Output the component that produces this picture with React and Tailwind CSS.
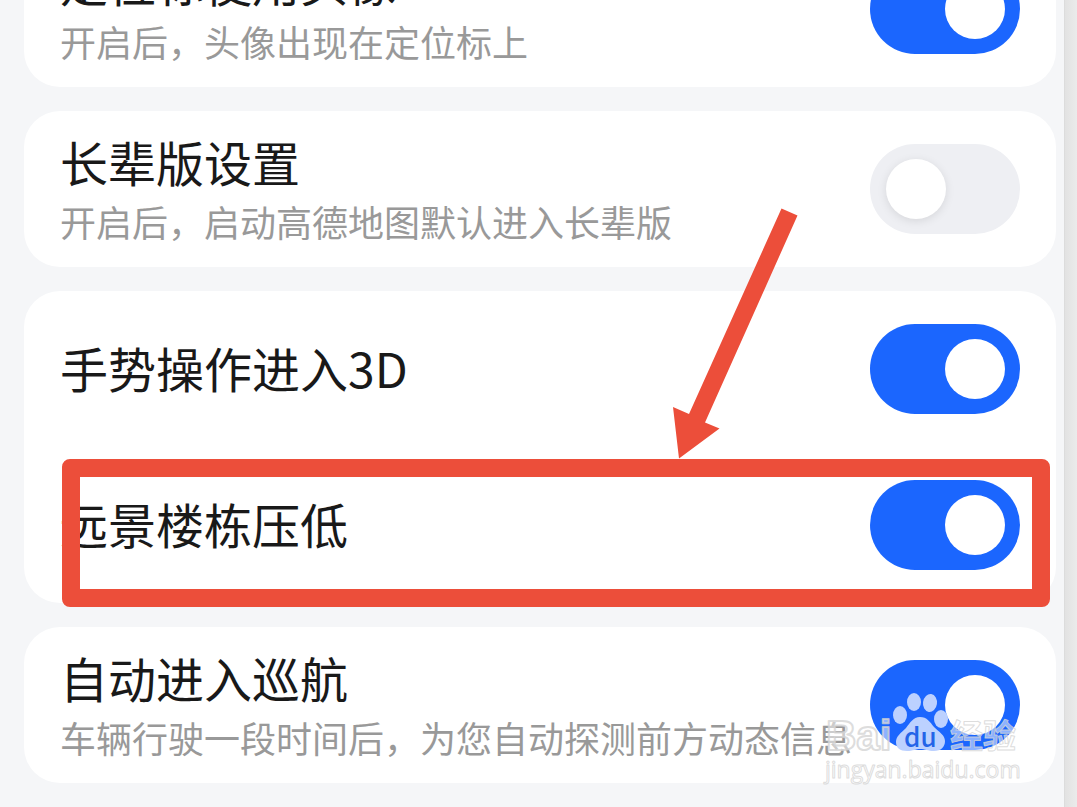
import React from "react";

const Toggle = ({ id, defaultChecked }) => (
  <input
    id={id}
    type="checkbox"
    role="switch"
    defaultChecked={defaultChecked}
    className="relative h-[90px] w-[150px] shrink-0 cursor-pointer appearance-none rounded-full bg-[#eeeff3] before:absolute before:left-4 before:top-[15px] before:size-[60px] before:rounded-full before:bg-white before:shadow-[0_2px_10px_rgba(0,0,0,0.1)] checked:bg-[#1b66fe] checked:before:left-[75px] checked:before:shadow-none"
  />
);

const SettingRow = ({ id, title, description, on, children }) => (
  <div className="relative flex h-[156px] items-center justify-between px-9">
    <div className="whitespace-nowrap">
      <label htmlFor={id} className="block pb-1 text-5xl leading-[60px] text-[#191919]">
        {title}
      </label>
      {description && <p className="text-4xl leading-[52px] text-[#999999]">{description}</p>}
    </div>
    <Toggle id={id} defaultChecked={on} />
    {children}
  </div>
);

const Card = ({ children }) => <section className="rounded-[36px] bg-white">{children}</section>;

const Highlight = () => (
  <>
    <div className="pointer-events-none absolute -bottom-1 left-[38px] right-[6px] top-3">
      <div className="h-full rounded-lg border-[18px] border-[#ec4e3a]" />
    </div>
    <svg
      className="pointer-events-none absolute -top-[240px] right-[258px]"
      width="126"
      height="252"
      viewBox="0 0 126 252"
      aria-hidden="true"
    >
      <path d="M109.500 1.500L125.500 8.500L33 215.500L47.500 221.500L7 251.500L1 200L17 207Z" fill="#ec4e3a" />
    </svg>
  </>
);

const Watermark = () => (
  <svg
    className="pointer-events-none absolute -bottom-1 right-[34px]"
    width="202"
    height="100"
    viewBox="0 0 202 100"
    aria-hidden="true"
  >
    <g fill="#ffffff" fillOpacity="0.5" stroke="#d4d4d4" strokeOpacity="0.8" strokeLinejoin="round">
      <text x="6" y="63" fontSize="42" fontWeight="700" strokeWidth="2" fontFamily="Liberation Sans, sans-serif">
        Bai
      </text>
      <text x="130" y="61" fontSize="33" fontWeight="700" strokeWidth="1" fontFamily="Noto Sans CJK SC, sans-serif">
        经验
      </text>
      <text x="5" y="91" fontSize="23" strokeWidth="1" fontFamily="Open Sans, sans-serif">
        jingyan.baidu.com
      </text>
    </g>
    <g fill="#bcd1ff">
      <ellipse cx="80" cy="28" rx="7" ry="9" />
      <ellipse cx="94" cy="15" rx="7" ry="9" />
      <ellipse cx="110" cy="16" rx="7" ry="9" transform="rotate(8 110 16)" />
      <ellipse cx="121" cy="32" rx="7" ry="9" />
      <path d="M100 30C93 30 90 36 86 41C81 46 76 49 76 55C76 61 80 64 87 64C93 64 96 62 100 62C105 62 108 64 114 64C121 64 125 60 125 54C125 48 119 45 114 40C110 35 107 30 100 30Z" />
    </g>
    <text x="84" y="60" fontSize="26" fontWeight="500" fill="#2464e8" fontFamily="Noto Sans CJK SC, sans-serif">
      du
    </text>
  </svg>
);

const App = () => {
  return (
    <div
      lang="zh-CN"
      className="flex min-h-screen overflow-hidden bg-[#f5f6f8] font-['Noto_Sans_CJK_SC',sans-serif]"
    >
      <main className="-mt-[69px] flex min-w-0 flex-1 flex-col gap-6 pb-6 pl-6 pr-2">
        <Card>
          <SettingRow id="avatar" title="定位标使用头像" description="开启后，头像出现在定位标上" on />
        </Card>

        <Card>
          <SettingRow id="elder" title="长辈版设置" description="开启后，启动高德地图默认进入长辈版" />
        </Card>

        <Card>
          <SettingRow id="gesture" title="手势操作进入3D" on />
          <SettingRow id="building" title="远景楼栋压低" on>
            <Highlight />
          </SettingRow>
        </Card>

        <Card>
          <SettingRow
            id="cruise"
            title="自动进入巡航"
            description="车辆行驶一段时间后，为您自动探测前方动态信息"
            on
          >
            <Watermark />
          </SettingRow>
        </Card>
      </main>

      <div className="w-[13px] shrink-0 border-l border-[#dcdcdc] bg-linear-to-r from-[#e2e2e2] to-[#ebebeb]" />
    </div>
  );
};

export default App;
